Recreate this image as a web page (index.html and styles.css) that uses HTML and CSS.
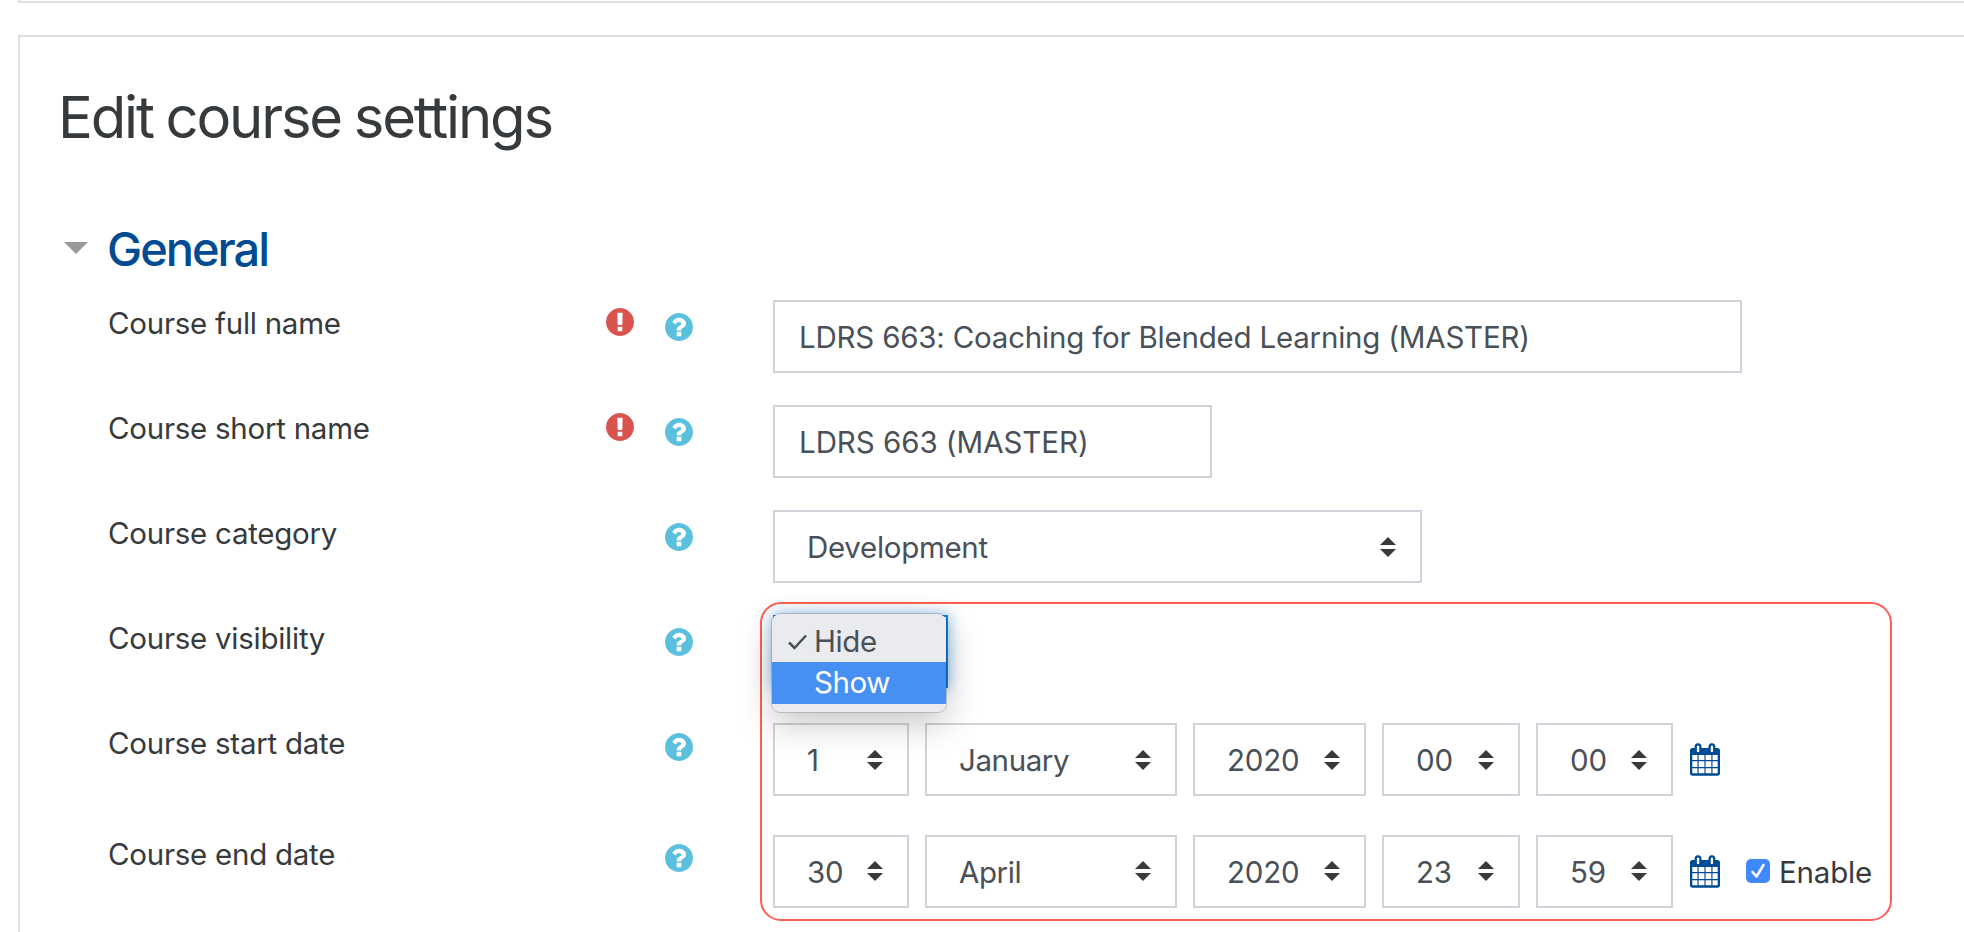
FILE: index.html
```html
<!DOCTYPE html>
<html lang="en">
<head>
<meta charset="utf-8">
<title>Edit course settings</title>
<link rel="stylesheet" href="styles.css">
</head>
<body>
<svg class="sprite" aria-hidden="true">
  <symbol id="req" viewBox="128 128 1536 1536"><path d="M896 128q209 0 385.500 103t279.500 279.500 103 385.500-103 385.500-279.500 279.500-385.500 103-385.500-103-279.500-279.500-103-385.500 103-385.500 279.500-279.500 385.500-103zm128 1247v-190q0-14-9-23.500t-22-9.500h-192q-13 0-23 10t-10 23v190q0 13 10 23t23 10h192q13 0 22-9.500t9-23.500zm-2-344l18-621q0-12-10-18-10-8-24-8h-220q-14 0-24 8-10 6-10 18l17 621q0 10 10 17.500t24 7.500h185q14 0 23.500-7.500t10.500-17.500z"/></symbol>
  <symbol id="help" viewBox="128 128 1536 1536"><path d="M1024 1376v-192q0-14-9-23t-23-9h-192q-14 0-23 9t-9 23v192q0 14 9 23t23 9h192q14 0 23-9t9-23zm256-672q0-88-55.500-163t-138.500-116-170-41q-243 0-371 213-15 24 8 42l132 100q7 6 19 6 16 0 25-12 53-68 86-92 34-24 86-24 48 0 85.500 26t37.500 59q0 38-20 61t-68 45q-63 28-115.500 86.500t-52.500 125.500v36q0 14 9 23t23 9h192q14 0 23-9t9-23q0-19 21.500-49.500t54.500-49.500q32-18 49-28.500t46-35 44.500-48 28-60.500 12.500-81zm384 192q0 209-103 385.500t-279.500 279.500-385.500 103-385.500-103-279.500-279.500-103-385.500 103-385.500 279.500-279.500 385.500-103 385.500 103 279.500 279.500 103 385.500z"/></symbol>
  <symbol id="cal" viewBox="0 0 1664 1792"><path d="M128 1664h288v-288h-288v288zM480 1664h320v-288h-320v288zM128 1312h288v-320h-288v320zM480 1312h320v-320h-320v320zM128 928h288v-288h-288v288zM864 1664h320v-288h-320v288zM480 928h320v-288h-320v288zM1248 1664h288v-288h-288v288zM864 1312h320v-320h-320v320zM512 448v-288q0-13-9.500-22.500t-22.500-9.500h-64q-13 0-22.500 9.500t-9.500 22.500v288q0 13 9.500 22.500t22.500 9.500h64q13 0 22.500-9.500t9.500-22.500zM1248 1312h288v-320h-288v320zM864 928h320v-288h-320v288zM1248 928h288v-288h-288v288zM1280 448v-288q0-13-9.500-22.500t-22.500-9.500h-64q-13 0-22.500 9.500t-9.500 22.500v288q0 13 9.500 22.500t22.500 9.500h64q13 0 22.500-9.500t9.500-22.500zM1664 384v1280q0 52-38 90t-90 38h-1408q-52 0-90-38t-38-90v-1280q0-52 38-90t90-38h128v-96q0-66 47-113t113-47h64q66 0 113 47t47 113v96h384v-96q0-66 47-113t113-47h64q66 0 113 47t47 113v96h128q52 0 90 38t38 90z"/></symbol>
  <symbol id="sort" viewBox="0 0 16 20"><path d="M8 0l8 8H0zM8 20l8-8H0z"/></symbol>
</svg>

<div class="page">
  <section class="card card-top"></section>
  <main class="card card-main">
    <h2 class="title">Edit course settings</h2>
    <div class="section-head">
      <svg class="caret" viewBox="0 0 24 12"><path d="M0 0h24L12 12z"/></svg>
      <h3 class="section-title">General</h3>
    </div>

    <div class="row">
      <span class="label">Course full name</span>
      <span class="icons"><svg class="ico req"><use href="#req"/></svg><svg class="ico help"><use href="#help"/></svg></span>
      <div class="fields"><div class="input w-full">LDRS 663: Coaching for Blended Learning (MASTER)</div></div>
    </div>
    <div class="row">
      <span class="label">Course short name</span>
      <span class="icons"><svg class="ico req"><use href="#req"/></svg><svg class="ico help"><use href="#help"/></svg></span>
      <div class="fields"><div class="input w-short">LDRS 663 (MASTER)</div></div>
    </div>
    <div class="row">
      <span class="label">Course category</span>
      <span class="icons"><svg class="ico help"><use href="#help"/></svg></span>
      <div class="fields"><div class="select w-category">Development<svg class="sort"><use href="#sort"/></svg></div></div>
    </div>
    <div class="row">
      <span class="label">Course visibility</span>
      <span class="icons"><svg class="ico help"><use href="#help"/></svg></span>
      <div class="fields">
        <div class="highlight"></div>
        <div class="select w-visibility focused"></div>
        <div class="menu">
          <div class="option"><svg class="tick" viewBox="0 0 20 16"><path d="M1.500 8.500l5.500 5.500L18.500 1.500"/></svg>Hide</div>
          <div class="option active">Show</div>
        </div>
      </div>
    </div>
    <div class="row row-date">
      <span class="label">Course start date</span>
      <span class="icons"><svg class="ico help"><use href="#help"/></svg></span>
      <div class="fields">
        <div class="select w-day">1<svg class="sort"><use href="#sort"/></svg></div>
        <div class="select w-month">January<svg class="sort"><use href="#sort"/></svg></div>
        <div class="select w-year">2020<svg class="sort"><use href="#sort"/></svg></div>
        <div class="select w-hour">00<svg class="sort"><use href="#sort"/></svg></div>
        <div class="select w-minute">00<svg class="sort"><use href="#sort"/></svg></div>
        <svg class="cal"><use href="#cal"/></svg>
      </div>
    </div>
    <div class="row row-date row-end">
      <span class="label">Course end date</span>
      <span class="icons"><svg class="ico help"><use href="#help"/></svg></span>
      <div class="fields">
        <div class="select w-day">30<svg class="sort"><use href="#sort"/></svg></div>
        <div class="select w-month">April<svg class="sort"><use href="#sort"/></svg></div>
        <div class="select w-year">2020<svg class="sort"><use href="#sort"/></svg></div>
        <div class="select w-hour">23<svg class="sort"><use href="#sort"/></svg></div>
        <div class="select w-minute">59<svg class="sort"><use href="#sort"/></svg></div>
        <svg class="cal"><use href="#cal"/></svg>
        <div class="enable">
          <svg class="checkbox" viewBox="0 0 24 24"><rect width="24" height="24" rx="5"/><path d="M6.500 13l4 4.500L17.500 6"/></svg>
          <span>Enable</span>
        </div>
      </div>
    </div>
  </main>
</div>
</body>
</html>
```
FILE: styles.css
```css
* { box-sizing: border-box; }
body {
  margin: 0;
  background: #fff;
  color: #373a3c;
  font-family: Inter, "Liberation Sans", sans-serif;
  font-size: 29.5px;
  line-height: 44px;
}
.sprite { display: none; }
.page {
  height: 932px;
  overflow: hidden;
  padding-left: 18px;
}
.card {
  border: 2px solid #dedfdf;
  border-right: 0;
  background: #fff;
}
.card-top { height: 3px; border-top: 0; }
.card-main {
  height: 960px;
  margin-top: 32px;
  padding: 44px 0 0 38px;
}
.title {
  margin: 0;
  height: 72px;
  font-size: 58px;
  font-weight: 400;
  line-height: 72px;
  letter-spacing: -2.15px;
  word-spacing: -1.5px;
  white-space: nowrap;
}
.section-head {
  display: flex;
  align-items: center;
  gap: 19px;
  height: 60px;
  margin: 66px 0 21px;
  padding-left: 6px;
}
.caret { width: 24px; height: 12px; margin-bottom: 2px; fill: #999; }
.section-title {
  margin: 0;
  color: #004b91;
  font-size: 47px;
  font-weight: 500;
  line-height: 60px;
  letter-spacing: -2px;
}
.row {
  display: grid;
  grid-template-columns: 443px 272px 1fr;
  height: 105px;
}
.label {
  padding: 1px 0 0 50px;
  letter-spacing: -.26px;
  white-space: nowrap;
}
.icons {
  display: flex;
  justify-content: flex-end;
  gap: 31px;
  padding: 8px 80.500px 0 0;
}
.ico { flex: none; width: 28px; height: 28px; }
.ico.req { fill: #d9534f; }
.ico.help { fill: #5bc0de; margin-top: 4.500px; }
.fields {
  position: relative;
  display: flex;
  align-items: flex-start;
  gap: 16px;
}
.input, .select {
  flex: none;
  height: 73px;
  border: 2px solid #ced4da;
  background: #fff;
  color: #495057;
  line-height: 71px;
  letter-spacing: -.21px;
  padding: 0 24px;
  white-space: nowrap;
}
.w-short { letter-spacing: -.05px; }
.select {
  display: flex;
  justify-content: space-between;
  padding-left: 32px;
}
.sort { width: 16px; height: 20px; margin-top: 25px; fill: #373a3c; }
.w-full { width: 969px; }
.w-short { width: 439px; }
.w-category { width: 649px; letter-spacing: -.3px; }
.w-visibility { width: 175px; }
.w-day { width: 136px; }
.w-month { width: 252px; letter-spacing: -.4px; }
.w-year { width: 173px; }
.w-hour { width: 138px; }
.w-minute { width: 137px; }
.row-date { height: 112px; }
.row-date .fields { padding-top: 3px; }
.row-end .label { padding-top: 0; }
.row-end .icons { padding-top: 7px; }
.row-end .sort { margin-top: 24px; }
.focused {
  border-color: #0a80e8;
  box-shadow: 0 0 14px rgba(1, 117, 216, .5);
}
.highlight {
  position: absolute;
  top: -13px;
  left: -13px;
  width: 1132px;
  height: 319px;
  border: 2px solid #ff5f55;
  border-radius: 21px;
}
.menu {
  position: absolute;
  z-index: 2;
  top: -1px;
  left: -1px;
  width: 174px;
  height: 98px;
  padding-top: 7px;
  border-radius: 8px;
  background: #e9ebee;
  box-shadow: 0 0 0 1px rgba(0, 0, 0, .16), 0 12px 34px rgba(0, 0, 0, .22);
  color: #495057;
  letter-spacing: -.4px;
}
.option {
  position: relative;
  height: 41px;
  padding-left: 42px;
  line-height: 41px;
}
.option.active { height: 42px; background: #4790f3; color: #fff; }
.tick {
  position: absolute;
  top: 13px;
  left: 15px;
  width: 21px;
  height: 16px;
  fill: none;
  stroke: #495057;
  stroke-width: 2.500;
}
.cal { width: 30px; height: 33px; margin: 20px 0 0 1px; fill: #004b91; }
.enable { display: flex; gap: 9px; margin: 15px 0 0 10px; letter-spacing: -.2px; }
.checkbox { width: 24px; height: 24px; margin-top: 9px; fill: #3f88fd; }
.checkbox path { fill: none; stroke: #fff; stroke-width: 2.600; stroke-linecap: round; stroke-linejoin: round; }
```
